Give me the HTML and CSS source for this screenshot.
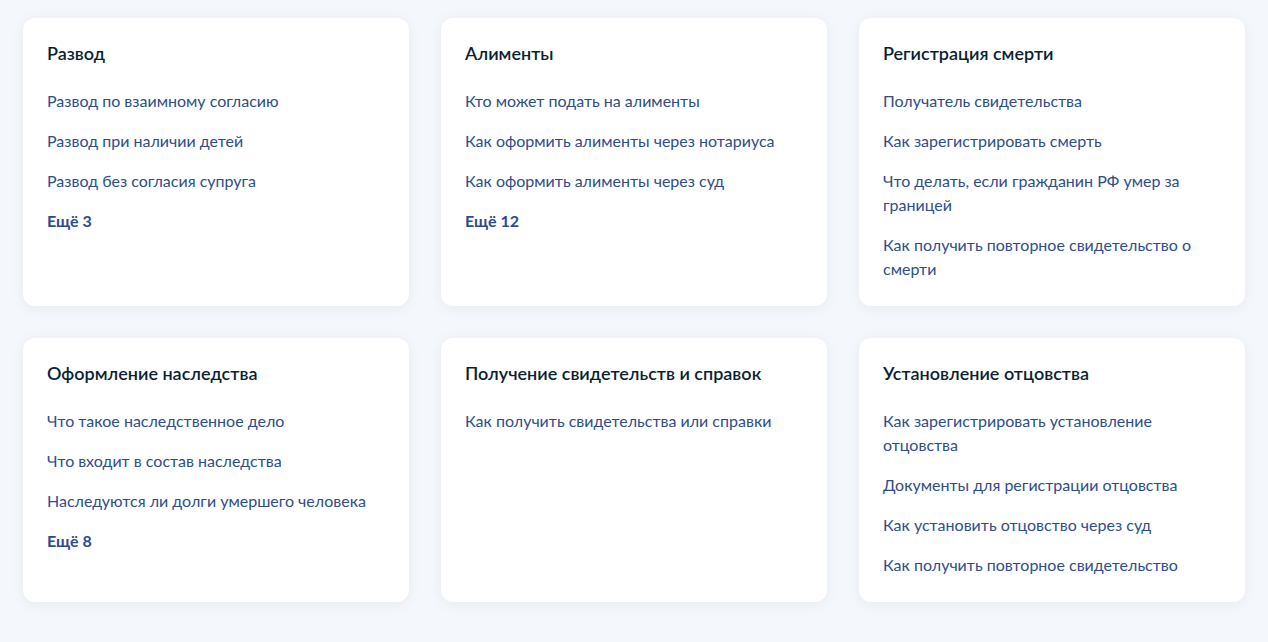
FILE: index.html
```html
<!DOCTYPE html>
<html lang="ru">
<head>
    <meta charset="UTF-8">
    <meta name="viewport" content="width=device-width, initial-scale=1.0">
    <title>Жизненные ситуации</title>
    <link rel="stylesheet" href="styles.css">
</head>
<body>
    <div class="cards">

        <div class="card">
            <h3 class="card-title">Развод</h3>
            <ul class="links">
                <li><a href="#">Развод по взаимному согласию</a></li>
                <li><a href="#">Развод при наличии детей</a></li>
                <li><a href="#">Развод без согласия супруга</a></li>
                <li><a href="#" class="more">Ещё 3</a></li>
            </ul>
        </div>

        <div class="card">
            <h3 class="card-title">Алименты</h3>
            <ul class="links">
                <li><a href="#">Кто может подать на алименты</a></li>
                <li><a href="#">Как оформить алименты через нотариуса</a></li>
                <li><a href="#">Как оформить алименты через суд</a></li>
                <li><a href="#" class="more">Ещё 12</a></li>
            </ul>
        </div>

        <div class="card">
            <h3 class="card-title">Регистрация смерти</h3>
            <ul class="links">
                <li><a href="#">Получатель свидетельства</a></li>
                <li><a href="#">Как зарегистрировать смерть</a></li>
                <li><a href="#">Что делать, если гражданин РФ умер за границей</a></li>
                <li><a href="#">Как получить повторное свидетельство о смерти</a></li>
            </ul>
        </div>

        <div class="card">
            <h3 class="card-title">Оформление наследства</h3>
            <ul class="links">
                <li><a href="#">Что такое наследственное дело</a></li>
                <li><a href="#">Что входит в состав наследства</a></li>
                <li><a href="#">Наследуются ли долги умершего человека</a></li>
                <li><a href="#" class="more">Ещё 8</a></li>
            </ul>
        </div>

        <div class="card">
            <h3 class="card-title">Получение свидетельств и справок</h3>
            <ul class="links">
                <li><a href="#">Как получить свидетельства или справки</a></li>
            </ul>
        </div>

        <div class="card">
            <h3 class="card-title">Установление отцовства</h3>
            <ul class="links">
                <li><a href="#">Как зарегистрировать установление отцовства</a></li>
                <li><a href="#">Документы для регистрации отцовства</a></li>
                <li><a href="#">Как установить отцовство через суд</a></li>
                <li><a href="#">Как получить повторное свидетельство</a></li>
            </ul>
        </div>

    </div>
</body>
</html>
```

FILE: styles.css
```css
body {
    margin: 0;
    background: #f4f7fb;
    font-family: Lato, "Noto Sans", sans-serif;
    color: #0b1f33;
}

.cards {
    display: grid;
    grid-template-columns: repeat(3, 386px);
    column-gap: 32px;
    row-gap: 32px;
    padding: 18px 23px;
}

.card {
    background: #fff;
    border-radius: 12px;
    padding: 23px 24px 25px;
    box-shadow: 0 2px 14px rgba(11, 31, 51, 0.06);
}

.card-title {
    margin: 0 0 24px;
    font-size: 18px;
    line-height: 24px;
    font-weight: 600;
    color: #0b1f33;
}

.links {
    list-style: none;
    margin: 0;
    padding: 0 10px 0 0;
    display: flex;
    flex-direction: column;
    gap: 16px;
}

.links a {
    font-size: 16px;
    line-height: 24px;
    color: #2d4d8e;
    text-decoration: none;
    display: block;
}

.links a.more {
    font-weight: 700;
    color: #2a4a93;
}
```
